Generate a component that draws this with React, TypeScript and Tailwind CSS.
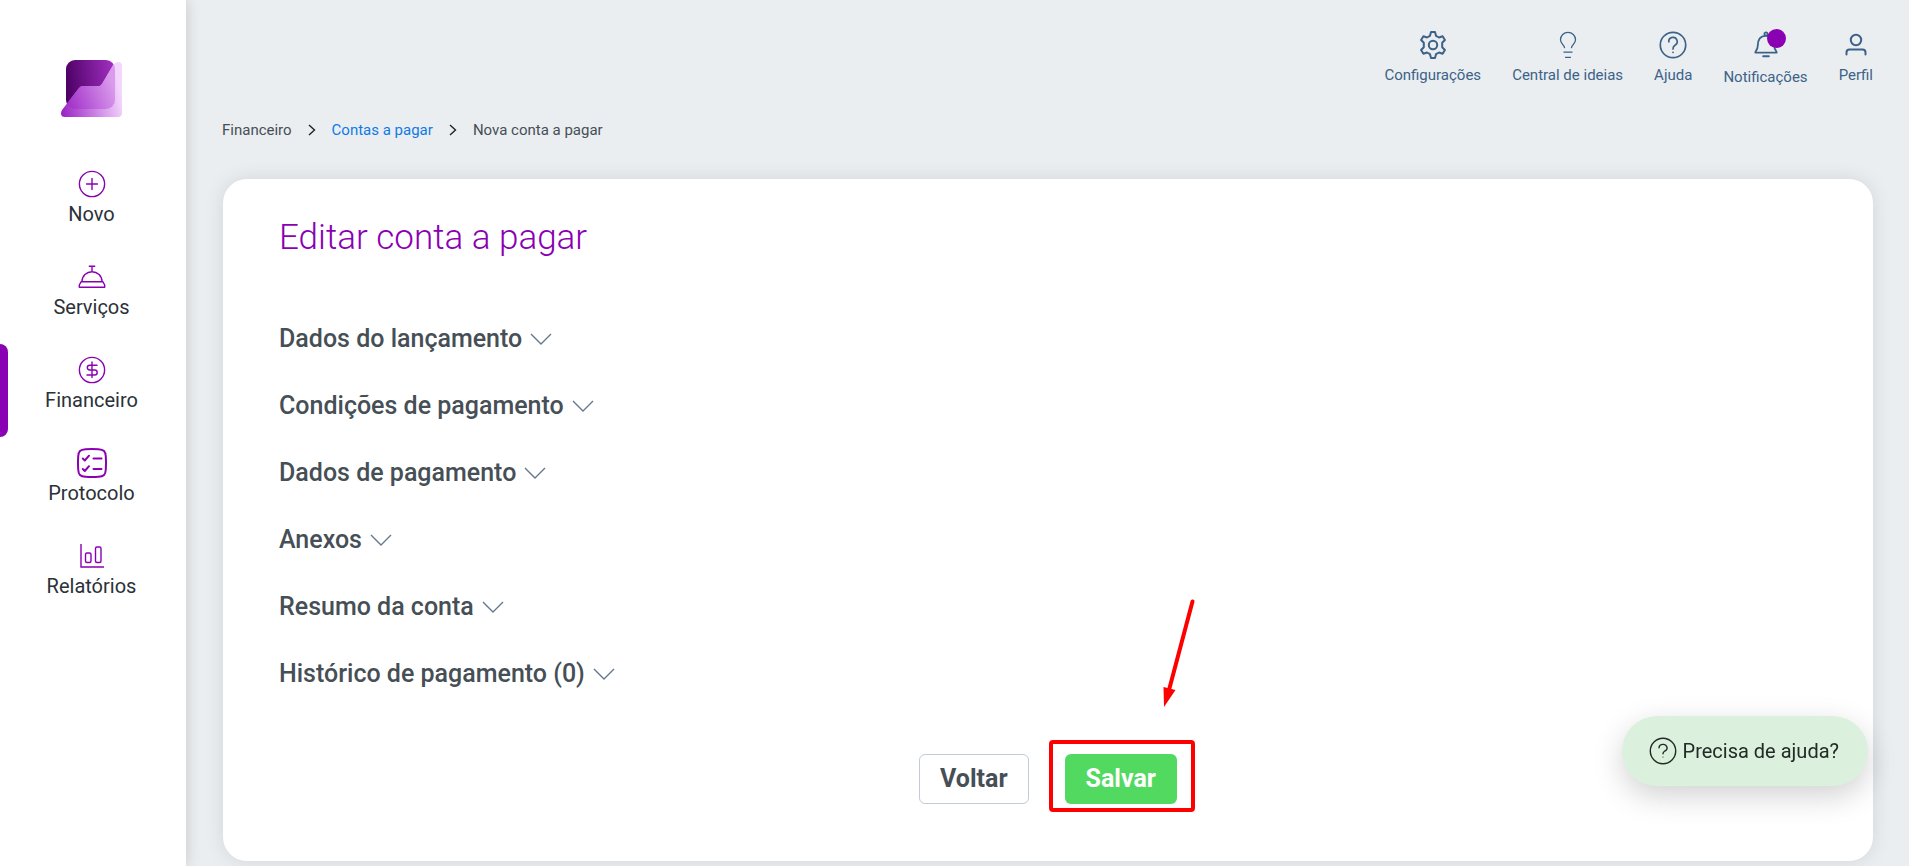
import { Fragment, type ReactNode } from "react"

function Logo() {
  return (
    <svg width="61" height="57" viewBox="0 0 61 57" aria-hidden="true">
      <defs>
        <linearGradient id="logo-dark" x1="5" y1="26" x2="54" y2="20" gradientUnits="userSpaceOnUse">
          <stop stopColor="#4c0064" />
          <stop offset="1" stopColor="#a02fc0" />
        </linearGradient>
        <linearGradient id="logo-light" x1="0" y1="52" x2="61" y2="40" gradientUnits="userSpaceOnUse">
          <stop stopColor="#9a22c4" />
          <stop offset="1" stopColor="#f4d6fd" />
        </linearGradient>
        <linearGradient id="logo-mix" x1="5" y1="48" x2="54" y2="30" gradientUnits="userSpaceOnUse">
          <stop stopColor="#a02ac8" />
          <stop offset="1" stopColor="#d99bec" />
        </linearGradient>
        <clipPath id="logo-square">
          <rect x="5" y="0" width="49" height="49" rx="9" />
        </clipPath>
      </defs>
      <rect x="5" y="0" width="49" height="49" rx="9" fill="url(#logo-dark)" />
      <path
        d="M1 50 18 28Q19.500 26 22 26H36Q39 27 41 24L52.500 4.500Q54 2 57 2 61 2 61 6V53Q61 57 57 57H4Q0 57 0 53.500 0 51.500 1 50Z"
        fill="url(#logo-light)"
      />
      <path
        d="M1 50 18 28Q19.500 26 22 26H36Q39 27 41 24L52.500 4.500Q54 2 57 2 61 2 61 6V53Q61 57 57 57H4Q0 57 0 53.500 0 51.500 1 50Z"
        fill="url(#logo-mix)"
        clipPath="url(#logo-square)"
      />
    </svg>
  )
}

function PlusIcon() {
  return (
    <svg width="28" height="28" viewBox="0 0 28 28" fill="none" stroke="currentColor" strokeWidth="1.4" strokeLinecap="round">
      <circle cx="14" cy="14" r="12.600" />
      <path d="M14 8.500v11M8.500 14h11" />
    </svg>
  )
}

function BellDeskIcon() {
  return (
    <svg width="28" height="28" viewBox="0 0 28 28" fill="none" stroke="currentColor" strokeWidth="1.4" strokeLinejoin="round">
      <path d="M10.800 3.200h6.400M14 3.200v5.300M4 18.500a10 9.800 0 0 1 20 0" />
      <path d="M3.200 18.700h21.600l1.900 3.300v2.300H1.300V22z" />
    </svg>
  )
}

function DollarIcon() {
  return (
    <svg width="28" height="28" viewBox="0 0 28 28" fill="none" stroke="currentColor" strokeWidth="1.4" strokeLinecap="round">
      <circle cx="14" cy="14" r="12.600" />
      <path d="M14 6v15.500M19 9.200h-7.300a2.400 2.400 0 0 0 0 4.800h5a2.500 2.500 0 0 1 0 5H9" />
    </svg>
  )
}

function ChecklistIcon() {
  return (
    <svg width="30" height="30" viewBox="0 0 30 30" fill="none" stroke="currentColor" strokeWidth="2" strokeLinecap="round" strokeLinejoin="round">
      <path d="M1.200 8.500C1.500 3.200 3.200 1.500 8.500 1.200Q15 .8 21.500 1.200C26.800 1.500 28.500 3.200 28.800 8.500Q29.200 15 28.800 21.500C28.500 26.800 26.800 28.500 21.500 28.800Q15 29.200 8.500 28.800C3.200 28.500 1.500 26.800 1.200 21.500Q.8 15 1.200 8.500Z" />
      <path d="m5.800 10.500 2 2 4.200-4.800M16.500 10.500h8M5.800 21l2 2 4.200-4.800M16.500 21h8" />
    </svg>
  )
}

function ChartIcon() {
  return (
    <svg width="28" height="28" viewBox="0 0 28 28" fill="none" stroke="currentColor" strokeWidth="1.4">
      <path d="M3 2v23h23" />
      <rect x="7.500" y="11" width="5.500" height="9.500" rx="1.500" />
      <rect x="17.500" y="5" width="5.500" height="15.500" rx="1.500" />
    </svg>
  )
}

function GearIcon() {
  return (
    <svg width="26" height="28" viewBox="0 0 26 28" fill="none" stroke="currentColor" strokeWidth="2" strokeLinejoin="round">
      <path d="M11 1h4l1 3.800 3 1.700 3.600-1.200 2.300 3.700-2.700 2.800v4.400l2.700 2.800-2.300 3.700-3.600-1.200-3 1.700L15 27h-4l-1-3.800-3-1.700-3.600 1.200L1.100 19l2.700-2.800v-4.400L1.100 9l2.300-3.700L7 6.500l3-1.700Z" />
      <circle cx="13" cy="14" r="4.200" />
    </svg>
  )
}

function BulbIcon() {
  return (
    <svg width="26" height="28" viewBox="0 0 26 28" fill="none" stroke="currentColor" strokeWidth="1.300" strokeLinecap="round">
      <path d="M9.500 16.500C8.800 13.500 5.500 12.500 5.500 8.800a7.500 7.500 0 0 1 15 0c0 3.700-3.300 4.700-4 7.700M9 21.200h8M10.500 26.300h5" />
    </svg>
  )
}

function HelpIcon({ thin }: { thin?: boolean }) {
  return (
    <svg width="28" height="28" viewBox="0 0 28 28" fill="none" stroke="currentColor" strokeWidth={thin ? 1.4 : 1.7} strokeLinecap="round">
      <circle cx="14" cy="14" r="12.700" />
      <path d={thin ? "M10 10.800a4 3.500 0 1 1 5.800 3.200c-1.300.700-1.800 1.200-1.800 2.700" : "M9.800 10.800a4.200 4.200 0 1 1 6.200 3.400c-1.500.900-2 1.600-2 3.800"} />
      <circle cx="14" cy={thin ? 20 : 21.3} r={thin ? 0.6 : 0.9} fill="currentColor" stroke="none" />
    </svg>
  )
}

function BellIcon() {
  return (
    <svg width="26" height="28" viewBox="0 0 26 28" fill="none" stroke="currentColor" strokeWidth="1.800" strokeLinecap="round" strokeLinejoin="round">
      <circle cx="13" cy="3" r="1.600" />
      <path d="M2.300 21.600c0-2 2.400-2.600 2.400-6.600 0-6.500 2.300-10.200 8.300-10.200s8.300 3.700 8.300 10.200c0 4 2.400 4.600 2.400 6.600Z" />
      <path d="M10.200 25.200h5.600" strokeWidth="2" />
    </svg>
  )
}

function UserIcon() {
  return (
    <svg width="26" height="28" viewBox="0 0 26 28" fill="none" stroke="currentColor" strokeWidth="2" strokeLinecap="round">
      <circle cx="13" cy="9" r="5.200" />
      <path d="M3.500 23.500v-2a3 3 0 0 1 3-3h13a3 3 0 0 1 3 3v2" />
    </svg>
  )
}

const menu = [
  { label: "Novo", icon: <PlusIcon /> },
  { label: "Serviços", icon: <BellDeskIcon /> },
  { label: "Financeiro", icon: <DollarIcon />, active: true },
  { label: "Protocolo", icon: <ChecklistIcon /> },
  { label: "Relatórios", icon: <ChartIcon /> },
]

const sections = [
  "Dados do lançamento",
  "Condições de pagamento",
  "Dados de pagamento",
  "Anexos",
  "Resumo da conta",
  "Histórico de pagamento (0)",
]

const crumbs = ["Financeiro", "Contas a pagar", "Nova conta a pagar"]

function TopLink({ label, children }: { label: string; children: ReactNode }) {
  return (
    <a href="#" className="flex flex-col items-center gap-1 text-[15px] leading-6">
      {children}
      <span>{label}</span>
    </a>
  )
}

function Sidebar() {
  return (
    <aside className="z-10 w-[186px] shrink-0 bg-white pt-15 shadow-[0_0_14px_rgba(0,0,0,0.16)]">
      <div className="flex justify-center pr-[3px]">
        <Logo />
      </div>
      <nav className="mt-[41px]">
        {menu.map((item) => (
          <a key={item.label} href="#" className="relative flex h-[93px] flex-col items-center gap-1 pt-3 pr-[3px] text-xl leading-6 text-[#2b3138]">
            {item.active && <span className="absolute inset-y-0 left-0 w-2 rounded-r-lg bg-[#8a00b3]" />}
            <span className="flex h-7 items-center text-[#8a00b3]">{item.icon}</span>
            {item.label}
          </a>
        ))}
      </nav>
    </aside>
  )
}

export default function App() {
  return (
    <div className="flex min-h-screen bg-[#eaeef1] font-[Roboto,sans-serif]">
      <Sidebar />

      <div className="flex min-w-0 flex-1 flex-col px-9 pb-[5px]">
        <header className="flex items-start justify-end gap-[31px] pt-[31px] text-[#3c6288]">
          <TopLink label="Configurações">
            <GearIcon />
          </TopLink>
          <TopLink label="Central de ideias">
            <BulbIcon />
          </TopLink>
          <TopLink label="Ajuda">
            <HelpIcon />
          </TopLink>
          <TopLink label="Notificações">
            <span className="relative h-[30px]">
              <BellIcon />
              <span className="absolute -top-0.5 left-[14px] size-[19px] rounded-full bg-[#8a00b3]" />
            </span>
          </TopLink>
          <TopLink label="Perfil">
            <UserIcon />
          </TopLink>
        </header>

        <nav aria-label="Breadcrumb" className="mt-[29px] flex items-center gap-4 text-[15px] leading-6 text-[#464f56]">
          {crumbs.map((crumb, i) => (
            <Fragment key={crumb}>
              {i > 0 && (
                <svg width="8" height="12" viewBox="0 0 8 12" fill="none" stroke="#222" strokeWidth="1.400">
                  <path d="m1 1 5.500 5L1 11" />
                </svg>
              )}
              {i === 1 ? (
                <a href="#" className="text-[#0f7ae5]">
                  {crumb}
                </a>
              ) : (
                <span>{crumb}</span>
              )}
            </Fragment>
          ))}
        </nav>

        <main className="mt-[37px] ml-px flex-1 rounded-3xl bg-white px-14 pt-[35px] pb-14 shadow-[0_0_20px_rgba(0,0,0,0.1)]">
          <h1 className="text-[35px] leading-12 font-light text-[#8a00b3]">Editar conta a pagar</h1>

          <div className="mt-[43px] flex flex-col items-start">
            {sections.map((section) => (
              <h2 key={section} className="flex h-[67px] items-center">
                <button type="button" aria-expanded="false" className="flex items-center gap-2 text-[25px] leading-8 font-medium text-[#464f56]">
                  {section}
                  <svg width="22" height="12" viewBox="0 0 22 12" fill="none" stroke="#64788f" strokeWidth="1.400">
                    <path d="m1 1 10 10L21 1" />
                  </svg>
                </button>
              </h2>
            ))}
          </div>

          <div className="mt-[47px] flex items-center justify-center gap-9">
            <button type="button" className="h-[50px] rounded-md border border-[#c3cbd4] bg-white px-5 text-[25px] font-bold text-[#464f56]">
              Voltar
            </button>
            <div className="relative">
              <button type="button" className="h-[50px] rounded-md bg-[#52d960] px-[21px] text-[25px] font-bold text-white">
                Salvar
              </button>
              <div className="pointer-events-none absolute -top-[14px] -right-[18px] -bottom-2 -left-4 rounded-sm border-4 border-[#ff0000]" />
              <svg className="pointer-events-none absolute -top-[156px] -right-[18px]" width="34" height="110" viewBox="0 0 34 110" aria-hidden="true">
                <path d="M31.500 3.500 8 92" stroke="#ff0000" strokeWidth="4" strokeLinecap="round" />
                <path d="M3 109 2.500 89 14.500 92Z" fill="#ff0000" />
              </svg>
            </div>
          </div>
        </main>
      </div>

      <button
        type="button"
        className="fixed right-[41px] bottom-20 z-20 flex h-[70px] items-center gap-1.5 rounded-full bg-[#dbf0dd] pr-[29px] pl-[27px] text-xl text-[#222b26] shadow-[0_10px_30px_rgba(0,0,0,0.18)]"
      >
        <HelpIcon thin />
        Precisa de ajuda?
      </button>
    </div>
  )
}
